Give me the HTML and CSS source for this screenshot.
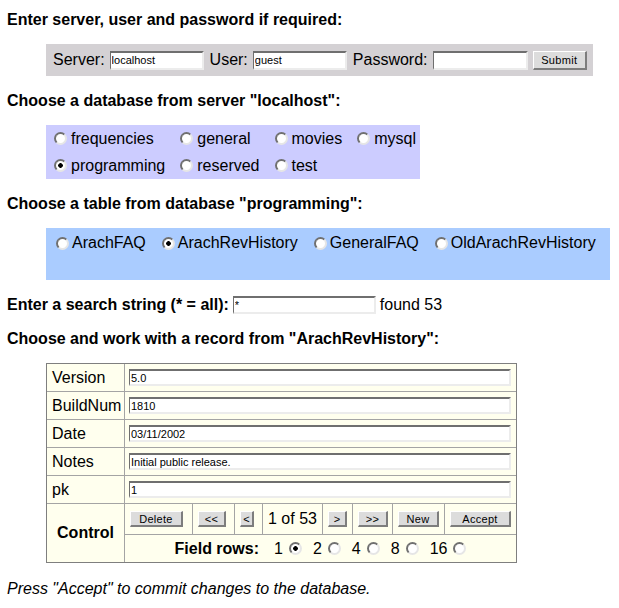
FILE: index.html
```html
<!DOCTYPE html>
<html lang="en">
<head>
    <meta charset="UTF-8">
    <meta name="viewport" content="width=device-width, initial-scale=1.0">
    <title>Database Browser</title>
    <link rel="stylesheet" href="styles.css">
</head>
<body>
    <p class="heading">Enter server, user and password if required:</p>
    <form class="login">
        <label>Server:</label><input type="text" class="field" value="localhost">
        <label>User:</label><input type="text" class="field" value="guest">
        <label>Password:</label><input type="password" class="field pw">
        <button type="button" class="btn submit">Submit</button>
    </form>

    <p class="heading">Choose a database from server "localhost":</p>
    <div class="choice dbs">
        <label class="opt"><input type="radio" name="db">frequencies</label>
        <label class="opt"><input type="radio" name="db">general</label>
        <label class="opt"><input type="radio" name="db">movies</label>
        <label class="opt"><input type="radio" name="db">mysql</label>
        <label class="opt"><input type="radio" name="db" checked>programming</label>
        <label class="opt"><input type="radio" name="db">reserved</label>
        <label class="opt"><input type="radio" name="db">test</label>
    </div>

    <p class="heading">Choose a table from database "programming":</p>
    <div class="choice tables">
        <label class="opt"><input type="radio" name="tbl">ArachFAQ</label>
        <label class="opt"><input type="radio" name="tbl" checked>ArachRevHistory</label>
        <label class="opt"><input type="radio" name="tbl">GeneralFAQ</label>
        <label class="opt"><input type="radio" name="tbl">OldArachRevHistory</label>
    </div>

    <div class="search">
        <b>Enter a search string (* = all):</b>
        <input type="text" class="field" value="*">
        <span>found 53</span>
    </div>

    <p class="heading">Choose and work with a record from "ArachRevHistory":</p>
    <div class="record">
        <div class="name">Version</div>
        <div class="value"><input type="text" class="field" value="5.0"></div>
        <div class="name">BuildNum</div>
        <div class="value"><input type="text" class="field" value="1810"></div>
        <div class="name">Date</div>
        <div class="value"><input type="text" class="field" value="03/11/2002"></div>
        <div class="name">Notes</div>
        <div class="value"><input type="text" class="field" value="Initial public release."></div>
        <div class="name">pk</div>
        <div class="value"><input type="text" class="field" value="1"></div>

        <div class="name control">Control</div>
        <div class="nav">
            <div><button type="button" class="btn b-delete">Delete</button></div>
            <div><button type="button" class="btn b-first">&lt;&lt;</button></div>
            <div><button type="button" class="btn b-prev">&lt;</button></div>
            <div class="count">1 of 53</div>
            <div><button type="button" class="btn b-next">&gt;</button></div>
            <div><button type="button" class="btn b-last">&gt;&gt;</button></div>
            <div><button type="button" class="btn b-new">New</button></div>
            <div><button type="button" class="btn b-accept">Accept</button></div>
        </div>
        <div class="rows">
            <b class="rows-label">Field rows:</b>
            <label class="size">1 <input type="radio" name="rows" checked></label>
            <label class="size">2 <input type="radio" name="rows"></label>
            <label class="size">4 <input type="radio" name="rows"></label>
            <label class="size">8 <input type="radio" name="rows"></label>
            <label class="size">16 <input type="radio" name="rows"></label>
        </div>
    </div>

    <p class="note">Press "Accept" to commit changes to the database.</p>
</body>
</html>
```

FILE: styles.css
```css
*{
    margin: 0;
    padding: 0;
    box-sizing: border-box;
}
body{
    font-family: "Liberation Sans", Arial, sans-serif;
    font-size: 16px;
    line-height: 18px;
    color: #000;
    background-color: #fff;
    padding: 11px 7px;
}
.heading{
    font-weight: bold;
    margin-bottom: 15px;
}

/* inputs and buttons drawn the old way */
.field{
    font-family: "Liberation Sans", Arial, sans-serif;
    font-size: 11px;
    color: #000;
    background-color: #fff;
    padding: 0 1px;
    border-top: 2px solid #6f6f6f;
    border-left: 1px solid #6f6f6f;
    border-right: 2px solid #ececec;
    border-bottom: 2px solid #ececec;
    outline: none;
}
.btn{
    font-family: "Liberation Sans", Arial, sans-serif;
    font-size: 11px;
    color: #000;
    background-color: #dcdcdc;
    border-top: 1px solid #fff;
    border-left: 1px solid #fff;
    border-right: 2px solid #7d7d7d;
    border-bottom: 2px solid #7d7d7d;
    height: 16px;
    padding: 0;
    letter-spacing: 0.3px;
}
input[type="radio"]{
    appearance: none;
    -webkit-appearance: none;
    width: 13px;
    height: 13px;
    margin: 0;
    flex-shrink: 0;
    border-radius: 50%;
    border: 2px solid;
    border-color: #707070 #e6e6e6 #e6e6e6 #707070;
    background-color: #fff;
}
input[type="radio"]:checked{
    background: radial-gradient(circle, #000 0 2px, #fff 2.6px);
}

.login{
    width: 547px;
    height: 32px;
    margin: 0 0 16px 39px;
    padding: 0 6px;
    background-color: #d4d1d4;
    display: flex;
    align-items: center;
    gap: 5px;
}
.login label{
    margin-left: 1px;
}
.login .field{
    width: 94px;
    height: 19px;
}
.login .pw{
    width: 95px;
}
.submit{
    width: 55px;
    height: 19px;
}

.choice{
    margin: 0 0 16px 39px;
}
.opt{
    display: flex;
    align-items: center;
    gap: 4px;
}
.dbs{
    width: max-content;
    display: grid;
    grid-template-columns: repeat(4, auto);
    grid-auto-rows: 27px;
    column-gap: 15px;
    padding: 0 4px 0 8px;
    background-color: #ccccff;
}
.tables{
    width: 564px;
    height: 52px;
    display: flex;
    align-items: flex-start;
    gap: 16px;
    padding: 6px 0 0 10px;
    background-color: #aaccff;
}
.tables .opt{
    gap: 3px;
}

.search{
    height: 18px;
    display: flex;
    align-items: center;
    margin-bottom: 16px;
}
.search .field{
    width: 143px;
    height: 18px;
    margin: 0 4px;
}

.record{
    width: max-content;
    display: grid;
    grid-template-columns: 77px 391px;
    grid-template-rows: repeat(5, 27px) 30px 27px;
    gap: 1px;
    background-color: #a4a4a4;
    border: 1px solid #7f7f7f;
    margin: 0 0 17px 39px;
}
.name{
    background-color: #ffffee;
    display: flex;
    align-items: center;
    padding-left: 5px;
}
.control{
    grid-row: span 2;
    justify-content: center;
    padding-left: 0;
    font-weight: bold;
}
.value{
    background-color: #ffffee;
    display: flex;
    align-items: center;
    padding: 0 5px 0 4px;
}
.value .field{
    flex: 1;
    height: 17px;
}
.nav{
    display: grid;
    grid-template-columns: 67px 41px 27px 59px 29px 39px 51px 1fr;
    gap: 1px;
}
.nav > div{
    background-color: #ffffee;
    display: flex;
    align-items: center;
    padding-left: 5px;
}
.b-delete{ width: 53px; }
.b-first{ width: 28px; }
.b-prev{ width: 14px; }
.b-next{ width: 19px; }
.b-last{ width: 30px; }
.b-new{ width: 41px; }
.b-accept{ width: 61px; }
.count{
    padding-left: 6px;
}
.rows{
    background-color: #ffffee;
    display: flex;
    align-items: center;
    justify-content: center;
    gap: 11px;
}
.rows-label{
    margin-right: 4px;
}
.size{
    display: flex;
    align-items: center;
    gap: 6px;
}

.note{
    font-style: italic;
}
```
